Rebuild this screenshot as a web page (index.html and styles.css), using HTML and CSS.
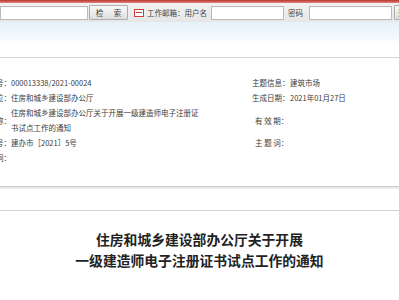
FILE: index.html
```html
<!DOCTYPE html>
<html lang="zh-CN">
<head>
    <meta charset="UTF-8">
    <meta name="viewport" content="width=device-width, initial-scale=1.0">
    <title>住房和城乡建设部办公厅关于开展一级建造师电子注册证书试点工作的通知</title>
    <link rel="stylesheet" href="styles.css">
</head>
<body>
    <!-- Top strip -->
    <div class="topline"></div>

    <!-- Search and login bar -->
    <div class="toolbar">
        <input type="text" class="search-box">
        <button class="btn btn-search">检 索</button>
        <svg class="mail-icon" width="10" height="8" viewBox="0 0 10 8">
            <rect x="0.5" y="0.5" width="9" height="7" fill="#fff" stroke="#d23b3b" stroke-width="1"/>
            <line x1="2" y1="3.5" x2="8" y2="3.5" stroke="#d23b3b" stroke-width="1"/>
        </svg>
        <span class="bar-text">工作邮箱：用户名</span>
        <input type="text" class="user-box">
        <span class="bar-text pass-label">密码</span>
        <input type="password" class="pass-box">
        <button class="btn btn-login">登录</button>
    </div>

    <!-- Light band under bar -->
    <div class="band"></div>

    <!-- Document info -->
    <table class="meta">
        <colgroup>
            <col class="c-label">
            <col class="c-value">
            <col class="c-gap">
            <col class="c-rlabel">
            <col>
        </colgroup>
        <tr>
            <td class="label">索 引 号：</td>
            <td>000013338/2021-00024</td>
            <td></td>
            <td class="rlabel">主题信息：</td>
            <td>建筑市场</td>
        </tr>
        <tr>
            <td class="label">发文单位：</td>
            <td>住房和城乡建设部办公厅</td>
            <td></td>
            <td class="rlabel">生成日期：</td>
            <td>2021年01月27日</td>
        </tr>
        <tr>
            <td class="label">文件名称：</td>
            <td class="wrap">住房和城乡建设部办公厅关于开展一级建造师电子注册证书试点工作的通知</td>
            <td></td>
            <td class="rlabel spaced">有 效 期：</td>
            <td></td>
        </tr>
        <tr>
            <td class="label">文　　号：</td>
            <td>建办市［2021］5号</td>
            <td></td>
            <td class="rlabel spaced">主 题 词：</td>
            <td></td>
        </tr>
        <tr>
            <td class="label">主 题 词：</td>
            <td></td>
            <td></td>
            <td></td>
            <td></td>
        </tr>
    </table>

    <!-- Dividers -->
    <div class="rule-top"></div>
    <div class="rule-bottom"></div>

    <!-- Title -->
    <h1 class="doc-title">住房和城乡建设部办公厅关于开展<br>一级建造师电子注册证书试点工作的通知</h1>
</body>
</html>
```

FILE: styles.css
```css
/* General */
body {
    margin: 0;
    padding: 0;
    background: #fff;
    color: #3a3a3a;
    font-family: "Noto Sans CJK SC", "Noto Sans", sans-serif;
    overflow: hidden;
}

/* Top strip */
.topline {
    height: 3px;
    background: linear-gradient(#b9372e, #e0867c);
}

/* Search / login bar */
.toolbar {
    display: flex;
    align-items: center;
    height: 19px;
    overflow: hidden;
    background: linear-gradient(#f2f2f2, #e6e6e6);
    font-size: 7.5px;
    color: #444;
    white-space: nowrap;
}
.toolbar > * {
    flex-shrink: 0;
}
.toolbar input {
    height: 14px;
    box-sizing: border-box;
    border: 1px solid #b9b9b9;
    background: #fff;
    margin: 0;
    padding: 0;
}
.search-box {
    width: 88px;
    margin-right: 1px !important;
}
.btn {
    height: 15px;
    box-sizing: border-box;
    border: 1px solid #adadad;
    border-radius: 1px;
    background: linear-gradient(#fbfbfb, #dedede);
    font-family: inherit;
    font-size: 7.5px;
    color: #444;
    padding: 0;
    margin: 0;
    white-space: nowrap;
}
.btn-search {
    width: 39px;
    text-align: center;
    word-spacing: 9px;
}
.mail-icon {
    margin-left: 6px;
    margin-right: 3px;
}
.bar-text {
    margin-right: 4px;
}
.user-box {
    width: 73px;
    margin-right: 4px !important;
}
.pass-label {
    margin-right: 6px;
}
.pass-box {
    width: 83px;
    margin-right: 2px !important;
}
.btn-login {
    width: 30px;
    text-align: left;
    padding-left: 3px;
}

/* Band under the bar */
.band {
    height: 35px;
    background: linear-gradient(#e6f1fa 0%, #f3f8fd 45%, #ffffff 60%);
    border-bottom: 1px solid #d4d4d4;
}

/* Document info table */
.meta {
    margin-top: 17px;
    margin-left: -50px;
    border-collapse: collapse;
    table-layout: fixed;
    font-size: 7.5px;
    line-height: 15px;
    color: #3a3a3a;
}
.meta td {
    padding: 0;
    vertical-align: middle;
    white-space: nowrap;
}
.meta td.wrap {
    white-space: normal;
}
.c-label { width: 61px; }
.c-value { width: 190px; }
.c-gap { width: 51px; }
.c-rlabel { width: 38px; }
.label {
    text-align: right;
}
.rlabel.spaced {
    padding-left: 3px;
}

/* Dividers */
.rule-top {
    margin-top: 21px;
    height: 0;
    border-top: 1px solid #c9c9c9;
    border-bottom: 2px solid #ececec;
}
.rule-bottom {
    margin-top: 21px;
    border-top: 1px solid #d2d2d2;
}

/* Title */
.doc-title {
    margin: 18px 0 0;
    text-align: center;
    font-size: 13.8px;
    line-height: 21px;
    font-weight: bold;
    color: #222;
}
```
